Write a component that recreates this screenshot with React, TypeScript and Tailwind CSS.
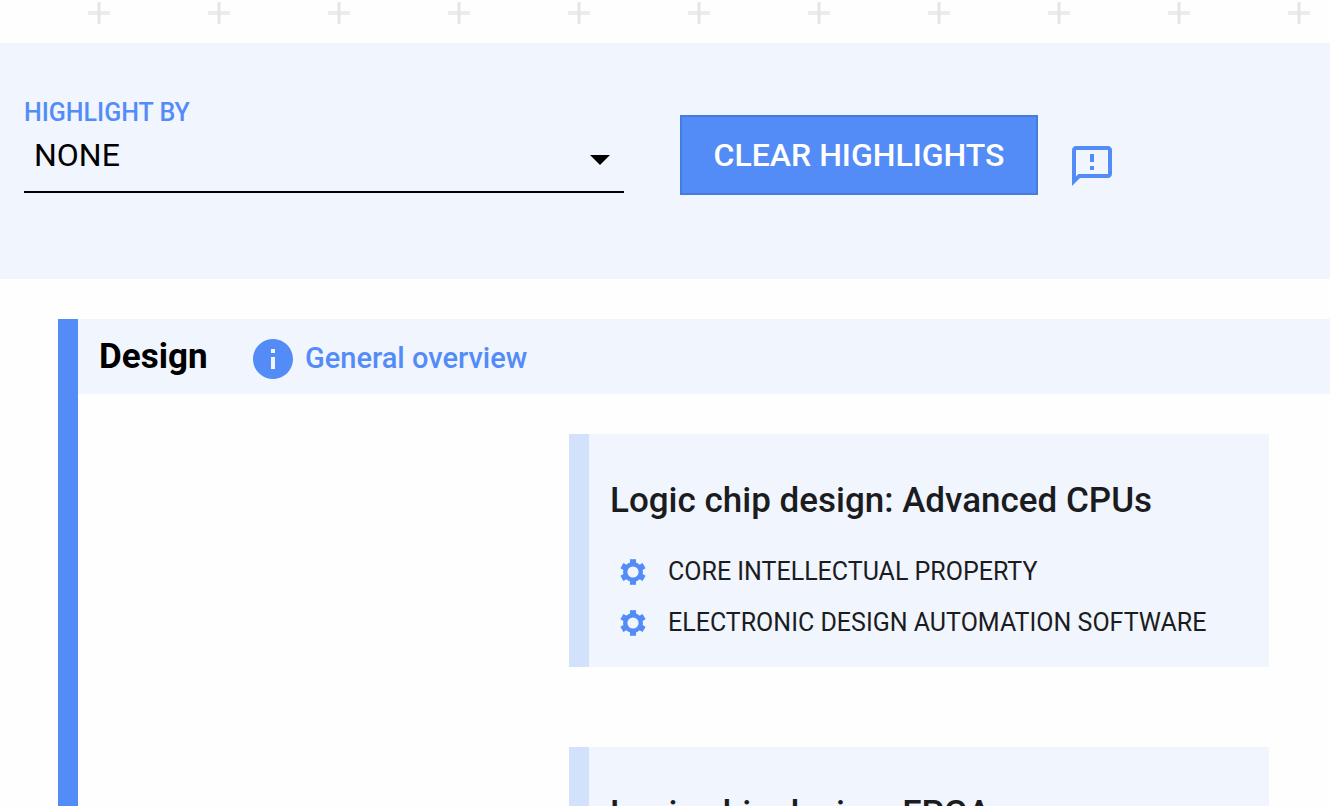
import { MdArrowDropDown, MdInfo, MdOutlineFeedback } from "react-icons/md"

const cards = [
  {
    title: "Logic chip design: Advanced CPUs",
    inputs: ["Core intellectual property", "Electronic design automation software"],
  },
  {
    title: "Logic chip design: FPGA",
    inputs: ["Core intellectual property", "Electronic design automation software"],
  },
]

function PlusRow() {
  return (
    <svg className="block h-[43px] w-full" aria-hidden="true">
      <defs>
        <pattern id="plus" x="39" y="0" width="120" height="120" patternUnits="userSpaceOnUse">
          <path d="M49 13h22" stroke="#ececef" strokeWidth="4" />
          <path d="M60 2v22" stroke="#e5e5e9" strokeWidth="3" />
        </pattern>
      </defs>
      <rect width="100%" height="100%" fill="url(#plus)" />
    </svg>
  )
}

function GearIcon() {
  return (
    <svg className="size-[26px] shrink-0 text-[#548cf7]" viewBox="-13 -13 26 26" aria-hidden="true">
      <circle r="7.8" fill="none" stroke="currentColor" strokeWidth="4.4" />
      <g fill="currentColor">
        <path id="tooth" d="M-3-12.8h6v4.5h-6z" />
        <use href="#tooth" transform="rotate(60)" />
        <use href="#tooth" transform="rotate(120)" />
        <use href="#tooth" transform="rotate(180)" />
        <use href="#tooth" transform="rotate(240)" />
        <use href="#tooth" transform="rotate(300)" />
      </g>
    </svg>
  )
}

function Toolbar() {
  return (
    <div className="flex h-[236px] items-start bg-[#f1f5fe] px-6 pt-14">
      <div className="w-[600px]">
        <label htmlFor="highlight" className="block text-[25px] leading-7 font-medium text-[#548cf7]">
          HIGHLIGHT BY
        </label>
        <div className="relative border-b-2 border-black text-black">
          <select
            id="highlight"
            className="block h-16 w-full appearance-none bg-transparent pr-12 pb-2 pl-[10px] text-[32px] leading-10"
          >
            <option>NONE</option>
          </select>
          <MdArrowDropDown className="pointer-events-none absolute top-2 right-0 size-12" />
        </div>
      </div>
      <button
        type="button"
        className="mt-4 ml-14 h-20 w-[358px] border-2 border-[#457cde] bg-[#548cf7] text-[32px] leading-10 font-medium text-white"
      >
        CLEAR HIGHLIGHTS
      </button>
      <button type="button" aria-label="Send feedback" className="mt-[43px] ml-[30px] text-[#548cf7]">
        <MdOutlineFeedback className="size-12" />
      </button>
    </div>
  )
}

function Card({ title, inputs }: { title: string; inputs: string[] }) {
  return (
    <article className="ml-auto w-[700px] border-l-[20px] border-[#d2e2fd] bg-[#f1f5fe] pt-10 pr-5 pb-[19px] pl-[21px]">
      <h3 className="text-[35px] leading-[54px] font-medium whitespace-nowrap">{title}</h3>
      <ul className="mt-[18px] pl-[10px]">
        {inputs.map((name) => (
          <li key={name} className="flex h-[51px] items-center gap-[22px] text-[25px] whitespace-nowrap uppercase">
            <GearIcon />
            {name}
          </li>
        ))}
      </ul>
    </article>
  )
}

export default function App() {
  return (
    <div className="h-screen overflow-hidden bg-[#fefefe] font-['Roboto',sans-serif] text-[#1b1c1e]">
      <PlusRow />
      <Toolbar />
      <section className="mt-10 ml-[58px] border-l-[20px] border-[#548cf7]">
        <header className="flex h-[75px] items-center bg-[#f1f5fe] pl-[21px]">
          <h2 className="w-[110px] text-[35px] leading-[68px] font-bold text-black">Design</h2>
          <a href="#overview" className="ml-10 flex items-center gap-2 pt-1 text-[29px] font-medium text-[#548cf7]">
            <MdInfo className="size-12" />
            General overview
          </a>
        </header>
        <div className="flex flex-col gap-20 pt-10 pr-[61px]">
          {cards.map((card) => (
            <Card key={card.title} {...card} />
          ))}
        </div>
      </section>
    </div>
  )
}
